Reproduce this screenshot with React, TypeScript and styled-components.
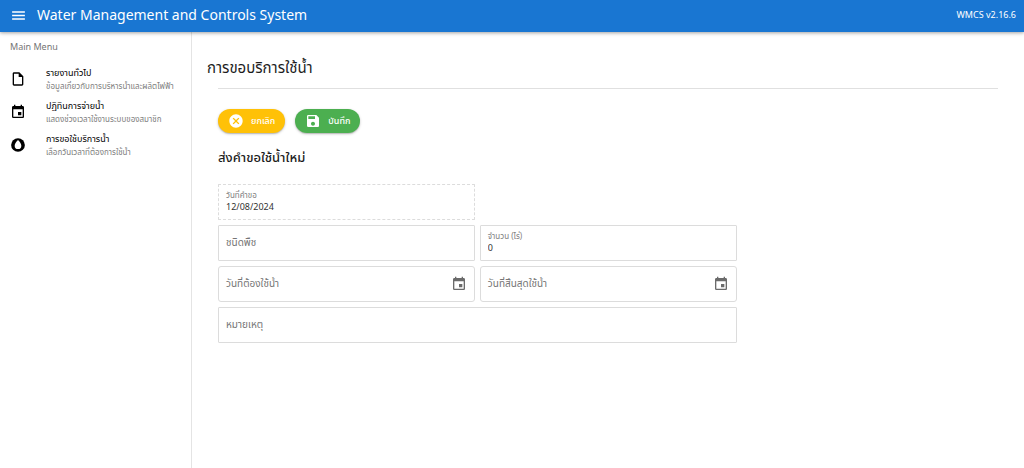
import React, { useState } from "react";
import styled, { createGlobalStyle, css } from "styled-components";
import { MdMenu, MdEvent, MdCancel, MdSave, MdOutlineInsertDriveFile } from "react-icons/md";

const GlobalStyle = createGlobalStyle`
  *, *::before, *::after { box-sizing: border-box; }
  body {
    margin: 0;
    background: #fff;
    color: #1d1d1d;
    font-family: "Noto Sans", "Noto Sans Thai", "Noto Sans Thai UI", sans-serif;
    font-size: 9px;
  }
  button, input { font-family: inherit; }
`;

const Page = styled.div`
  display: flex;
  flex-direction: column;
  min-height: 100vh;
`;

const Header = styled.header`
  position: relative;
  z-index: 1;
  display: flex;
  align-items: center;
  height: 32px;
  padding: 0 8px 2px 10px;
  background: #1976d2;
  color: #fff;
  box-shadow: 0 1px 3px rgba(0, 0, 0, 0.24), 0 0 6px rgba(0, 0, 0, 0.2);
`;

const MenuButton = styled.button`
  display: flex;
  padding: 1px 0 0;
  border: 0;
  background: none;
  color: inherit;
  font-size: 17px;
  cursor: pointer;
`;

const AppTitle = styled.div`
  flex: 1;
  padding-left: 10px;
  font-size: 14px;
  line-height: 20px;
`;

const Version = styled.div`
  font-size: 9px;
  line-height: 14px;
`;

const Body = styled.div`
  display: flex;
  flex: 1;
`;

const Sidebar = styled.nav`
  flex: 0 0 192px;
  border-right: 1px solid #e4e4e4;
`;

const MenuHeading = styled.div`
  padding: 8px 10px;
  color: #757575;
  font-size: 9px;
  line-height: 14px;
`;

const MenuLink = styled.a`
  display: flex;
  align-items: center;
  height: 33px;
  padding: 0 10px;
  color: #000;
  text-decoration: none;
  white-space: nowrap;

  svg {
    flex: 0 0 16px;
    margin-right: 20px;
    font-size: 16px;
  }
`;

const MenuText = styled.span`
  display: flex;
  flex-direction: column;
`;

const MenuTitle = styled.span`
  font-size: 9px;
  line-height: 14px;
`;

const MenuCaption = styled.span`
  color: #808080;
  font-size: 8px;
  line-height: 12px;
`;

const Main = styled.main`
  flex: 1;
  min-width: 0;
  padding: 23px 26px;
`;

const PageTitle = styled.h1`
  margin: 0 0 0 -11px;
  font-size: 15px;
  font-weight: 400;
  line-height: 24px;
`;

const Divider = styled.hr`
  height: 1px;
  margin: 9px 0 20px;
  border: 0;
  background: #e0e0e0;
`;

const Actions = styled.div`
  display: flex;
  gap: 10px;
`;

const ActionButton = styled.button<{ $color: string }>`
  display: flex;
  align-items: center;
  gap: 7px;
  height: 24px;
  padding: 0 10px;
  border: 0;
  border-radius: 12px;
  background: ${(p) => p.$color};
  color: #fff;
  font-size: 9px;
  font-weight: 500;
  line-height: 14px;
  box-shadow: 0 1px 3px rgba(0, 0, 0, 0.2), 0 1px 1px rgba(0, 0, 0, 0.14);
  cursor: pointer;

  svg { font-size: 16px; }
`;

const SectionTitle = styled.h2`
  margin: 14px 0 17px;
  font-size: 13px;
  font-weight: 500;
  line-height: 20px;
`;

const FormArea = styled.div`
  display: grid;
  grid-template-columns: 2fr 1fr;
  column-gap: 2px;
`;

const Form = styled.form`
  display: grid;
  grid-template-columns: 1fr 1fr;
  gap: 5px;
`;

const Control = styled.div<{ $readOnly?: boolean; $wide?: boolean; $round?: boolean; $newRow?: boolean }>`
  display: flex;
  align-items: center;
  height: 36px;
  padding: 0 7px;
  border: 1px ${(p) => (p.$readOnly ? "dashed" : "solid")} #dcdcdc;
  border-radius: ${(p) => (p.$round ? "3px" : "1px")};
  ${(p) => p.$wide && css`grid-column: 1 / -1;`}
  ${(p) => p.$newRow && css`grid-column-start: 1;`}
`;

const Stack = styled.div`
  display: grid;
  flex: 1;
  align-items: center;
`;

const Label = styled.label<{ $floating: boolean }>`
  grid-column: 1;
  grid-row: 1;
  padding-bottom: 2px;
  color: #757575;
  pointer-events: none;
  font-size: 10px;
  line-height: 16px;
  ${(p) =>
    p.$floating &&
    css`
      align-self: start;
      color: #808080;
      font-size: 8px;
      line-height: 12px;
    `}
`;

const Input = styled.input<{ $floating: boolean }>`
  grid-column: 1;
  grid-row: 1;
  width: 100%;
  height: 26px;
  padding: ${(p) => (p.$floating ? "8px 0 0" : "0")};
  border: 0;
  outline: 0;
  background: none;
  color: #333;
  font-size: 9px;
`;

const PickerButton = styled.button`
  display: flex;
  padding: 0;
  border: 0;
  background: none;
  color: #6b6b6b;
  font-size: 16px;
  cursor: pointer;
`;

function DropIcon() {
  return (
    <svg width="1em" height="1em" viewBox="0 0 24 24" aria-hidden="true">
      <circle cx="12" cy="12" r="10.3" fill="currentColor" />
      <path d="M12 4.6c3.2 3.4 5 6.100 5 8.500a5 5 0 0 1-10 0c0-2.400 1.800-5.100 5-8.500z" fill="#fff" />
    </svg>
  );
}

type FieldProps = {
  id: string;
  label: string;
  initial?: string;
  readOnly?: boolean;
  wide?: boolean;
  date?: boolean;
  newRow?: boolean;
};

function Field({ id, label, initial = "", readOnly, wide, date, newRow }: FieldProps) {
  const [value, setValue] = useState(initial);
  const floating = value !== "";
  return (
    <Control $readOnly={readOnly} $wide={wide} $round={date} $newRow={newRow}>
      <Stack>
        <Label htmlFor={id} $floating={floating}>{label}</Label>
        <Input
          id={id}
          value={value}
          readOnly={readOnly}
          $floating={floating}
          onChange={(e) => setValue(e.target.value)}
        />
      </Stack>
      {date && (
        <PickerButton type="button" aria-label={label}>
          <MdEvent />
        </PickerButton>
      )}
    </Control>
  );
}

const menu = [
  { title: "รายงานทั่วไป", caption: "ข้อมูลเกี่ยวกับการบริหารน้ำและผลิตไฟฟ้า", icon: <MdOutlineInsertDriveFile /> },
  { title: "ปฏิทินการจ่ายน้ำ", caption: "แสดงช่วงเวลาใช้งานระบบของสมาชิก", icon: <MdEvent /> },
  { title: "การขอใช้บริการน้ำ", caption: "เลือกวันเวลาที่ต้องการใช้น้ำ", icon: <DropIcon /> },
];

export default function App() {
  return (
    <Page>
      <GlobalStyle />
      <Header>
        <MenuButton type="button" aria-label="Menu">
          <MdMenu />
        </MenuButton>
        <AppTitle>Water Management and Controls System</AppTitle>
        <Version>WMCS v2.16.6</Version>
      </Header>
      <Body>
        <Sidebar>
          <MenuHeading>Main Menu</MenuHeading>
          {menu.map((item) => (
            <MenuLink href="#" key={item.title}>
              {item.icon}
              <MenuText>
                <MenuTitle>{item.title}</MenuTitle>
                <MenuCaption>{item.caption}</MenuCaption>
              </MenuText>
            </MenuLink>
          ))}
        </Sidebar>
        <Main>
          <PageTitle>การขอบริการใช้น้ำ</PageTitle>
          <Divider />
          <Actions>
            <ActionButton type="button" $color="#ffc107">
              <MdCancel />
              ยกเลิก
            </ActionButton>
            <ActionButton type="submit" form="request" $color="#4caf50">
              <MdSave />
              บันทึก
            </ActionButton>
          </Actions>
          <SectionTitle>ส่งคำขอใช้น้ำใหม่</SectionTitle>
          <FormArea>
            <Form id="request" onSubmit={(e) => e.preventDefault()}>
              <Field id="requested" label="วันที่คำขอ" initial="12/08/2024" readOnly />
              <Field id="crop" label="ชนิดพืช" newRow />
              <Field id="area" label="จำนวน (ไร่)" initial="0" />
              <Field id="start" label="วันที่ต้องใช้น้ำ" date />
              <Field id="end" label="วันที่สิ้นสุดใช้น้ำ" date />
              <Field id="note" label="หมายเหตุ" wide />
            </Form>
          </FormArea>
        </Main>
      </Body>
    </Page>
  );
}
